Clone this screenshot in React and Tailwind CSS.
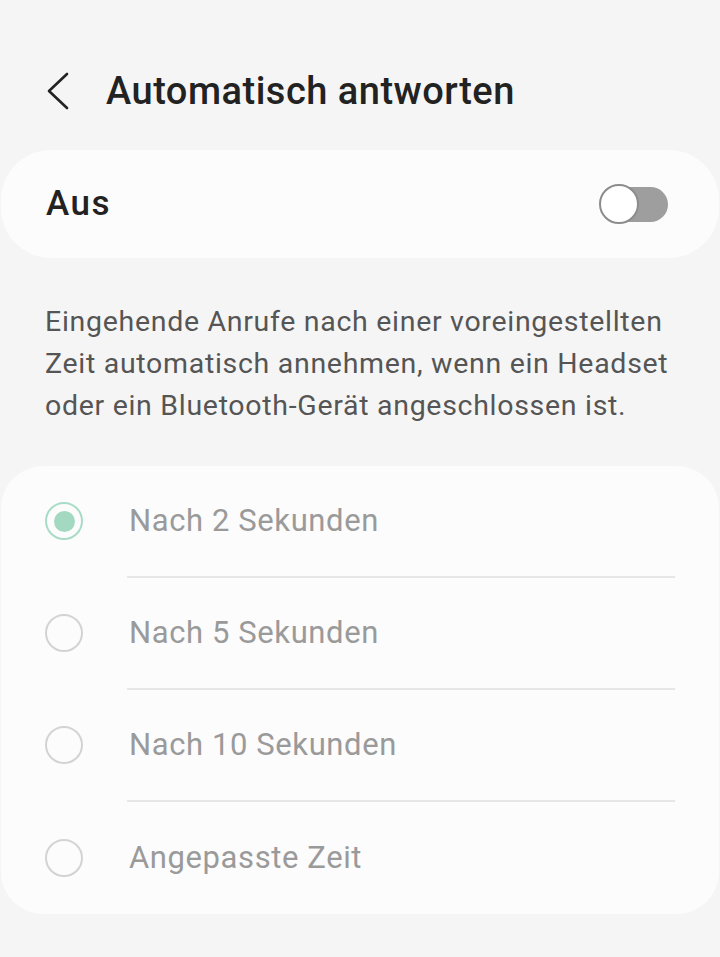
import React from "react";

const OPTIONS = [
  { label: "Nach 2 Sekunden", selected: true },
  { label: "Nach 5 Sekunden" },
  { label: "Nach 10 Sekunden" },
  { label: "Angepasste Zeit" },
];

function Radio({ selected }) {
  if (selected) {
    return (
      <div className="w-[38px] h-[38px] rounded-full border-[2px] border-[#a9dcc7] flex items-center justify-center shrink-0">
        <div className="w-[21px] h-[21px] rounded-full bg-[#a3d9c1]" />
      </div>
    );
  }
  return <div className="w-[38px] h-[38px] rounded-full border-[2px] border-[#d3d3d3] shrink-0" />;
}

function Toggle() {
  return (
    <div className="relative w-[69px] h-[40px] flex items-center">
      <div className="absolute right-0 w-[64px] h-[35px] rounded-full bg-[#9e9e9e]" />
      <div className="relative w-[40px] h-[40px] rounded-full bg-white border-[2.5px] border-[#8c8c8c]" />
    </div>
  );
}

export default function App() {
  return (
    <div className="min-h-[957px] w-[720px] bg-[#f5f5f5] font-['Roboto',sans-serif]">
      {/* header */}
      <div className="h-[150px] pt-[62px]">
        <div className="flex items-center h-[58px]">
          <button className="pl-[47px] pr-[37px] h-full flex items-center">
            <svg width="22" height="38" viewBox="0 0 22 38" fill="none">
              <polyline points="20,2 2,19 20,36" stroke="#222" strokeWidth="2.6" strokeLinecap="round" strokeLinejoin="round" />
            </svg>
          </button>
          <h1 className="text-[38px] font-medium text-[#222] tracking-[0.5px]">Automatisch antworten</h1>
        </div>
      </div>

      {/* master switch */}
      <div className="mx-[1px] h-[108px] rounded-[50px] bg-[#fcfcfc] flex items-center justify-between pl-[45px] pr-[51px]">
        <span className="text-[35px] font-medium text-[#222] tracking-[1.5px]">Aus</span>
        <Toggle />
      </div>

      {/* description */}
      <p className="mt-[43px] pl-[45px] pr-[36px] text-[28.5px] leading-[42px] tracking-[0.7px] text-[#555]">
        Eingehende Anrufe nach einer voreingestellten Zeit automatisch annehmen, wenn ein Headset oder ein Bluetooth-Gerät angeschlossen ist.
      </p>

      {/* options */}
      <div className="mt-[39px] mx-[1px] rounded-[42px] bg-[#fcfcfc]">
        {OPTIONS.map((o, i) => (
          <div key={o.label} className="h-[112px] flex flex-col">
            <div className="flex-1 flex items-center pl-[44px]">
              <Radio selected={o.selected} />
              <span className="ml-[46px] text-[31px] tracking-[0.6px] text-[#9a9a9a]">{o.label}</span>
            </div>
            {i < OPTIONS.length - 1 && <div className="ml-[126px] mr-[44px] h-[2px] bg-[#e6e6e6]" />}
          </div>
        ))}
      </div>
    </div>
  );
}
